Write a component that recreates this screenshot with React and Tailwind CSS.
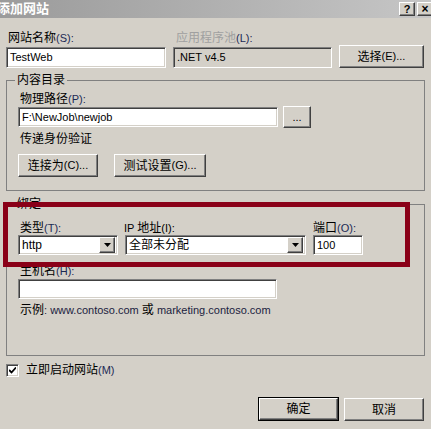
import React from "react";

// 控件样式（仿 Windows 经典主题）
const sunken =
    "border border-t-[#808080] border-l-[#808080] border-b-white border-r-white shadow-[inset_1px_1px_0_#404040,inset_-1px_-1px_0_#d4d0c8]";
const raised =
    "border border-t-white border-l-white border-b-[#404040] border-r-[#404040] shadow-[inset_-1px_-1px_0_#808080] bg-[#d4d0c8]";

function Label({ zh, k, gray, className = "" }) {
    return (
        <div
            className={`h-[14px] leading-[14px] whitespace-nowrap ${
                gray ? "text-[#a0a0a0]" : "text-black"
            } ${className}`}
        >
            {zh}
            {k && <span className="text-[11px] text-[#1c2a55]">({k}):</span>}
        </div>
    );
}

function Input({ value, className = "", disabled }) {
    return (
        <div
            className={`${sunken} h-[20px] flex items-center px-[3px] text-[11px] ${
                disabled ? "bg-[#d4d0c8]" : "bg-white"
            } ${className}`}
        >
            {value}
        </div>
    );
}

function Select({ value, className = "" }) {
    return (
        <div
            className={`${sunken} h-[20px] bg-white flex items-center justify-between pl-[3px] pr-[2px] ${className}`}
        >
            <span className="text-[12px]">{value}</span>
            <div
                className={`${raised} w-[16px] h-[16px] flex items-center justify-center`}
            >
                <svg width="7" height="4" viewBox="0 0 7 4">
                    <path d="M0 0H7L3.5 4Z" fill="#000" />
                </svg>
            </div>
        </div>
    );
}

function Button({ children, className = "", primary }) {
    return (
        <div
            className={`${raised} ${
                primary ? "outline outline-1 outline-black" : ""
            } flex items-center justify-center whitespace-nowrap ${className}`}
        >
            {children}
        </div>
    );
}

export default function App() {
    return (
        <div
            className="relative w-[431px] h-[429px] overflow-hidden bg-[#d4d0c8] text-[12px] text-black"
            style={{ fontFamily: '"Liberation Sans", "Noto Sans CJK SC", sans-serif' }}
        >
            {/* 标题栏 */}
            <div className="h-[18px] flex items-center justify-between bg-gradient-to-r from-[#9b9b9b] to-[#c6c6c6]">
                <div className="-ml-[3px] text-white font-bold text-[13px] leading-[18px]">
                    添加网站
                </div>
                <div className="flex gap-[2px] pr-0 -mr-[2px]">
                    <div className={`${raised} w-[16px] h-[14px] flex items-center justify-center text-[11px] font-bold leading-none`}>
                        ?
                    </div>
                    <div className={`${raised} w-[16px] h-[14px] flex items-center justify-center text-[12px] font-bold leading-none`}>
                        ×
                    </div>
                </div>
            </div>

            <div className="px-[6px]">
                {/* 网站名称 / 应用程序池 */}
                <div className="mt-[13px] flex gap-[7px] items-end">
                    <div className="w-[160px]">
                        <Label zh="网站名称" k="S" className="ml-[2px]" />
                        <Input value="TestWeb" className="mt-[2px] h-[21px]" />
                    </div>
                    <div className="w-[159px]">
                        <Label zh="应用程序池" k="L" gray className="ml-[3px]" />
                        <Input value=".NET v4.5" disabled className="mt-[2px] h-[21px]" />
                    </div>
                    <Button className="w-[85px] h-[23px]">
                        选择<span className="text-[11px]">(E)...</span>
                    </Button>
                </div>

                {/* 内容目录 */}
                <fieldset className="mt-[5px] w-[419px] border border-[#808080] pl-[11px] pb-[13px]">
                    <legend className="-ml-[3px] px-[2px] leading-[14px]">内容目录</legend>
                    <Label zh="物理路径" k="P" className="mt-[5px] ml-[2px]" />
                    <div className="flex items-center gap-[5px]">
                        <Input value="F:\NewJob\newjob" className="w-[260px]" />
                        <Button className="w-[28px] h-[22px] text-[11px]">...</Button>
                    </div>
                    <div className="mt-[4px] ml-[2px] leading-[14px]">传递身份验证</div>
                    <div className="mt-[8px] flex gap-[16px]">
                        <Button className="w-[80px] h-[23px]">
                            连接为<span className="text-[11px]">(C)...</span>
                        </Button>
                        <Button className="w-[92px] h-[23px]">
                            测试设置<span className="text-[11px]">(G)...</span>
                        </Button>
                    </div>
                </fieldset>

                {/* 绑定 */}
                <fieldset className="mt-[6px] w-[419px] border border-[#808080] pl-[11px] pb-[38px]">
                    <legend className="-ml-[3px] px-[2px] leading-[14px]">绑定</legend>
                    <div className="mt-[10px] flex gap-[7px]">
                        <div className="w-[100px]">
                            <Label zh="类型" k="T" className="ml-[2px]" />
                            <Select value="http" />
                        </div>
                        <div className="w-[181px]">
                            <div className="h-[14px] leading-[14px] -ml-[1px]">
                                <span className="text-[11px]">IP </span>地址
                                <span className="text-[11px]">(I):</span>
                            </div>
                            <Select value="全部未分配" />
                        </div>
                        <div className="w-[50px]">
                            <Label zh="端口" k="O" />
                            <Input value="100" />
                        </div>
                    </div>
                    <Label zh="主机名" k="H" className="mt-[9px] ml-[2px]" />
                    <Input value="" className="mt-[1px] w-[259px]" />
                    <div className="mt-[4px] ml-[2px] leading-[14px] whitespace-nowrap">
                        示例<span className="text-[11px] text-[#1b1d3f]">: www.contoso.com </span>或
                        <span className="text-[11px] text-[#1b1d3f]"> marketing.contoso.com</span>
                    </div>
                </fieldset>

                {/* 立即启动网站 */}
                <div className="mt-[7px] flex items-center gap-[7px] h-[14px]">
                    <div className={`${sunken} w-[13px] h-[13px] bg-white flex items-center justify-center`}>
                        <svg width="7" height="7" viewBox="0 0 7 7">
                            <path d="M0 3L2.5 5.5L7 0.5" stroke="#000" strokeWidth="1.8" fill="none" />
                        </svg>
                    </div>
                    <div className="leading-[14px]">
                        立即启动网站<span className="text-[11px] text-[#1c2a55]">(M)</span>
                    </div>
                </div>

                {/* 确定 / 取消 */}
                <div className="mt-[21px] flex justify-end gap-[6px] pr-[1px]">
                    <Button primary className="w-[79px] h-[22px]">确定</Button>
                    <Button className="w-[80px] h-[23px]">取消</Button>
                </div>
            </div>

            {/* 红色标注框 */}
            <div className="absolute left-[3px] top-[202px] w-[407px] h-[65px] border-[5px] border-[#8a0018]" />
        </div>
    );
}
